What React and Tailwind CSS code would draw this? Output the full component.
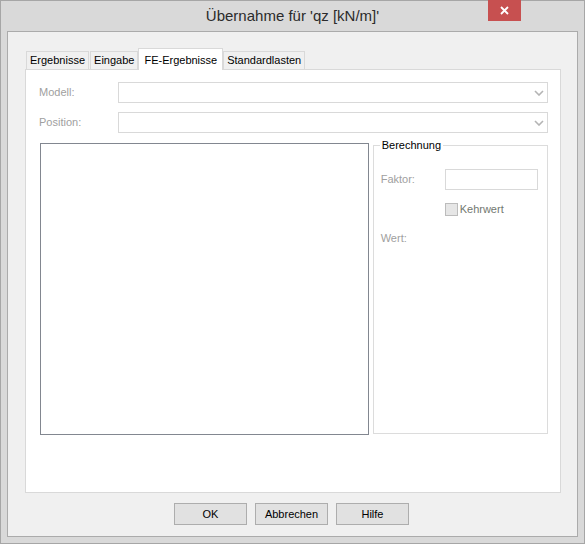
import React from 'react';

const font = { fontFamily: '"Liberation Sans", Arial, sans-serif' };

const Chevron = () => (
  <svg width="10" height="6" viewBox="0 0 10 6" className="mr-[3px]">
    <path d="M1 1 L5 5 L9 1" fill="none" stroke="#b4b4b4" strokeWidth="1.6" />
  </svg>
);

const Combo = () => (
  <div className="w-[430px] h-[21px] border border-[#d9d9d9] bg-white flex items-center justify-end">
    <Chevron />
  </div>
);

const Tab = ({ label, active }) =>
  active ? (
    <div className="h-[22px] px-[5px] bg-white border border-b-0 border-[#d9d9d9] -mb-px relative z-10 flex items-start pt-[3px] text-[11px] text-black">
      {label}
    </div>
  ) : (
    <div className="h-[18px] px-[3px] bg-[#f0f0f0] border border-b-0 border-[#d9d9d9] flex items-center text-[11px] text-black">
      {label}
    </div>
  );

const Button = ({ label }) => (
  <button className="w-[73px] h-[22px] border border-[#adadad] bg-[#e1e1e1] text-[11px] text-black flex items-center justify-center">
    {label}
  </button>
);

const App = () => {
  return (
    <div className="w-[585px] h-[544px] bg-[#d9d9d9] border border-[#a6a6a6] flex flex-col" style={font}>
      <div className="h-[30px] relative flex items-center justify-center">
        <span className="text-[15px] text-[#2b2b2b] mt-[1px]">Übernahme für 'qz [kN/m]'</span>
        <div className="absolute right-[63px] top-[-1px] w-[33px] h-[21px] bg-[#c75050] flex items-center justify-center">
          <svg width="9" height="9" viewBox="0 0 9 9">
            <path d="M1 1 L8 8 M8 1 L1 8" stroke="white" strokeWidth="1.8" />
          </svg>
        </div>
      </div>
      <div className="flex-1 mx-[6px] mb-[6px] border border-[#ababab] bg-[#f0f0f0] flex flex-col pl-[17px] pr-[16px] pt-[16px]">
        <div className="flex items-end pl-[1px]">
          <Tab label="Ergebnisse" />
          <div className="ml-[1px]"><Tab label="Eingabe" /></div>
          <Tab label="FE-Ergebnisse" active />
          <Tab label="Standardlasten" />
        </div>
        <div className="h-[424px] border border-[#d9d9d9] bg-white flex flex-col pl-[13px] pr-[12px] pt-[12px]">
          <div className="flex items-center justify-between h-[21px]">
            <span className="text-[11px] text-[#a0a0a0]">Modell:</span>
            <Combo />
          </div>
          <div className="flex items-center justify-between h-[21px] mt-[9px]">
            <span className="text-[11px] text-[#a0a0a0]">Position:</span>
            <Combo />
          </div>
          <div className="flex mt-[10px] pl-[1px] gap-[4px]">
            <div className="w-[330px] h-[292px] border border-[#828790] bg-white" />
            <div className="w-[176px] h-[289px] mt-[2px] border border-[#dcdcdc] relative flex flex-col pl-[7px]">
              <span className="absolute -top-[7px] left-[6px] bg-white px-[2px] text-[11px] text-black leading-[13px]">Berechnung</span>
              <div className="flex items-center mt-[23px]">
                <span className="w-[64px] text-[11px] text-[#a0a0a0]">Faktor:</span>
                <div className="w-[93px] h-[21px] border border-[#d9d9d9] bg-white" />
              </div>
              <div className="flex items-center mt-[11px] ml-[64px]">
                <div className="w-[13px] h-[13px] border border-[#bcbcbc] bg-[#e6e6e6]" />
                <span className="ml-[2px] text-[11px] text-[#727870]">Kehrwert</span>
              </div>
              <div className="mt-[12px] text-[11px] text-[#a0a0a0]">Wert:</div>
            </div>
          </div>
        </div>
        <div className="flex justify-center gap-[8px] mt-[10px] pr-[3px]">
          <Button label="OK" />
          <Button label="Abbrechen" />
          <Button label="Hilfe" />
        </div>
      </div>
    </div>
  );
};

export default App;
